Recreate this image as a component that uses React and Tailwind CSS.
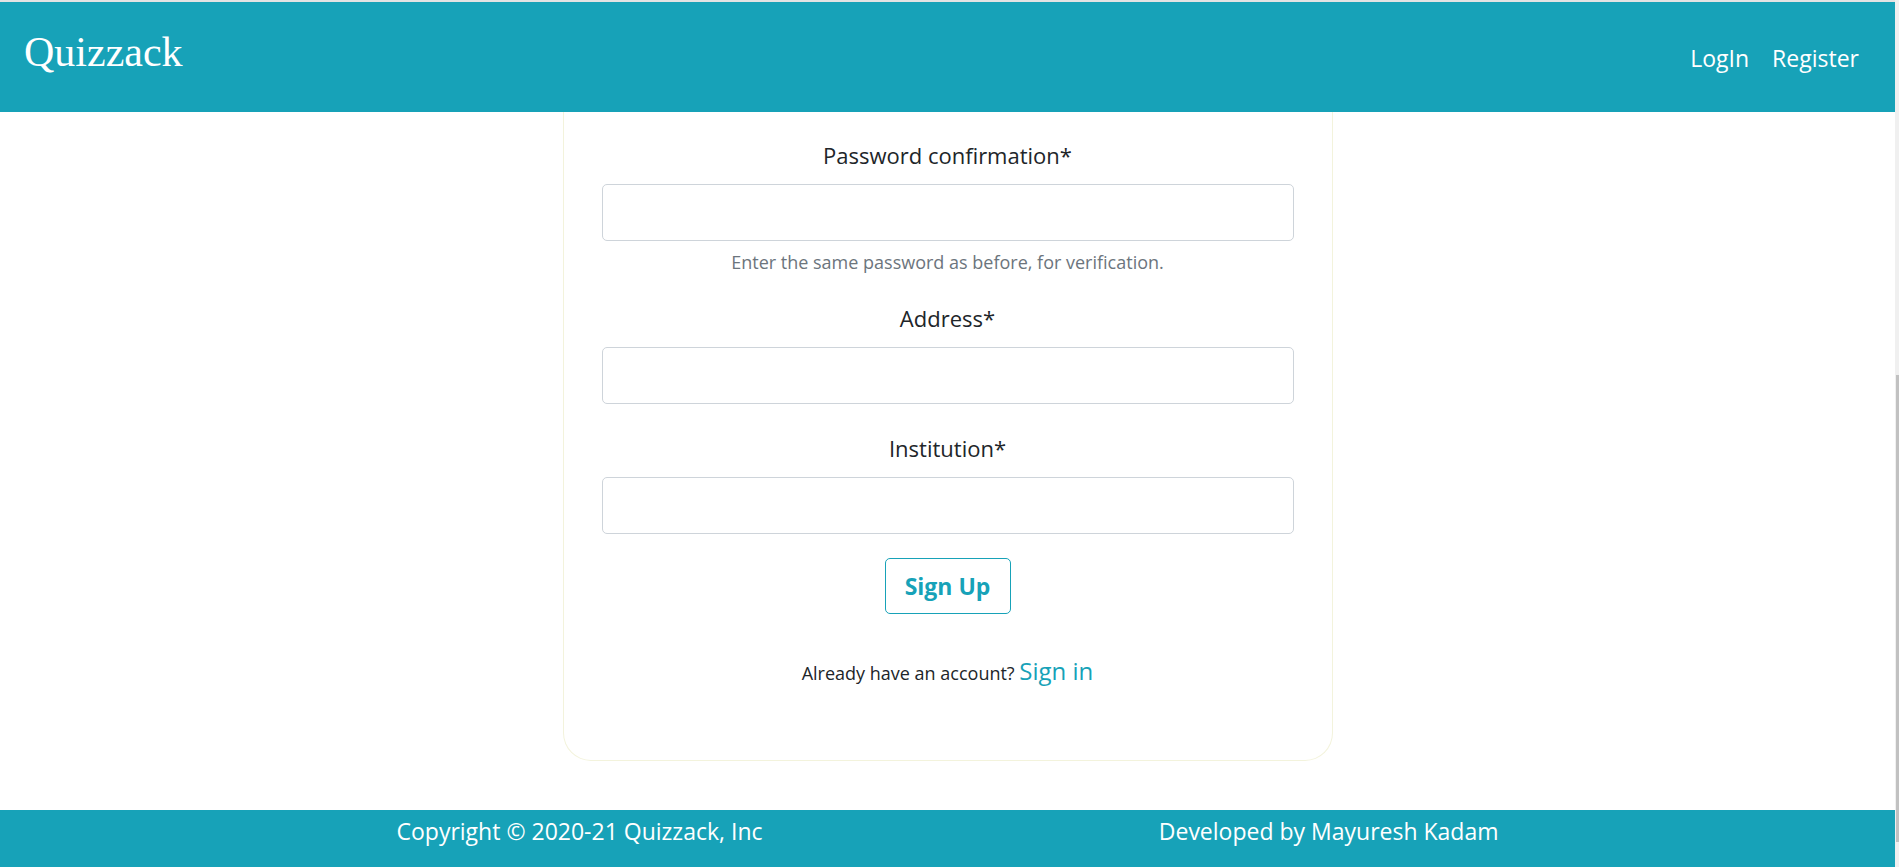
import React from "react";

const Field = ({ label, help, first }) => (
  <div className="flex flex-col items-center">
    <label className={`${first ? "" : "mt-[29px]"} text-[22px] leading-[30px] text-[#212529]`}>
      {label}
    </label>
    <input
      type="text"
      className="mt-[14px] h-[57px] w-full rounded-[5px] border border-[#ced4da] bg-white px-3 outline-none"
    />
    {help && (
      <small className="mt-[9px] text-[18px] leading-[24px] text-[#6c757d]">{help}</small>
    )}
  </div>
);

const App = () => {
  return (
    <div className="flex h-[867px] w-full overflow-hidden bg-white font-['Segoe_UI','Open_Sans',sans-serif]">
      <div className="flex min-w-0 flex-1 flex-col">
        <div className="h-[2px] shrink-0 bg-[#e3e3e3]" />

        {/* Navbar */}
        <header className="flex h-[110px] shrink-0 items-start justify-between bg-[#17a2b8] pl-[24px] pr-[36px] text-white">
          <a className="mt-[24px] font-['Liberation_Serif',serif] text-[42px] leading-[52px]">Quizzack</a>
          <nav className="mt-[41px] flex gap-[23px] text-[23px] leading-[30px]">
            <a>LogIn</a>
            <a>Register</a>
          </nav>
        </header>

        {/* Form card (scrolled, top cut off) */}
        <main className="flex min-h-0 flex-1 justify-center overflow-hidden">
          <div className="mb-[49px] w-[770px] rounded-b-[28px] border border-t-0 border-[#f3f3dc] px-[38px] pb-[76px] pt-[28px]">
            <Field
              first
              label="Password confirmation*"
              help="Enter the same password as before, for verification."
            />
            <Field label="Address*" />
            <Field label="Institution*" />

            <div className="mt-[24px] flex justify-center">
              <button className="h-[56px] w-[126px] rounded-[5px] border border-[#17a2b8] text-[23px] leading-[30px] font-bold text-[#17a2b8]">
                Sign Up
              </button>
            </div>

            <p className="mt-[42px] text-center text-[18px] leading-[30px] text-[#212529]">
              Already have an account?{" "}
              <a className="text-[24px] text-[#17a2b8]">Sign in</a>
            </p>
          </div>
        </main>

        {/* Footer */}
        <footer className="h-[57px] shrink-0 bg-[#17a2b8] text-white">
          <div className="mx-auto flex w-[1142px] justify-between px-[20px] pt-[7px] text-[23px] leading-[28px]">
            <span>Copyright © 2020-21 Quizzack, Inc</span>
            <span>Developed by Mayuresh Kadam</span>
          </div>
        </footer>
      </div>

      {/* scrollbar strip */}
      <div className="flex w-[4px] shrink-0 flex-col bg-[#f0f0f0]">
        <div className="mt-[375px] h-[467px] w-[3px] self-end bg-[#c1c1c1]" />
      </div>
    </div>
  );
};

export default App;
